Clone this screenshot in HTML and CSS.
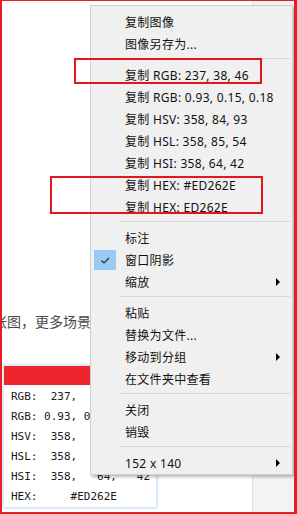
FILE: index.html
```html
<!DOCTYPE html>
<html lang="zh-CN">
<head>
    <meta charset="UTF-8">
    <title>取色菜单</title>
    <link rel="stylesheet" href="styles.css">
</head>
<body>
    <div class="screen">
        <div class="page">
            <div class="main">
                <p class="page-text">张图，更多场景</p>

                <!-- color info window -->
                <div class="color-panel">
                    <div class="color-head"></div>
                    <div class="color-body">
                        <div class="row">RGB:  237,   38,   46</div>
                        <div class="row">RGB: 0.93, 0.15, 0.18</div>
                        <div class="row">HSV:  358,   84,   93</div>
                        <div class="row">HSL:  358,   85,   54</div>
                        <div class="row">HSI:  358,   64,   42</div>
                        <div class="row">HEX:     #ED262E</div>
                    </div>
                </div>
            </div>
            <div class="side"></div>
        </div>

        <!-- context menu -->
        <div class="menu">
            <div class="item"><span class="label">复制图像</span></div>
            <div class="item"><span class="label">图像另存为...</span></div>
            <div class="sep"></div>
            <div class="item"><span class="label">复制 RGB: 237, 38, 46</span></div>
            <div class="item"><span class="label">复制 RGB: 0.93, 0.15, 0.18</span></div>
            <div class="item"><span class="label">复制 HSV: 358, 84, 93</span></div>
            <div class="item"><span class="label">复制 HSL: 358, 85, 54</span></div>
            <div class="item"><span class="label">复制 HSI: 358, 64, 42</span></div>
            <div class="item"><span class="label">复制 HEX: #ED262E</span></div>
            <div class="item"><span class="label">复制 HEX: ED262E</span></div>
            <div class="sep"></div>
            <div class="item"><span class="label">标注</span></div>
            <div class="item">
                <span class="check">
                    <svg width="22" height="20" viewBox="0 0 22 20"><path d="M7.5 10.5 L10 13 L15 8" fill="none" stroke="#2b2b2b" stroke-width="1.2"/></svg>
                </span>
                <span class="label">窗口阴影</span>
            </div>
            <div class="item"><span class="label">缩放</span><span class="arrow"></span></div>
            <div class="sep"></div>
            <div class="item"><span class="label">粘贴</span></div>
            <div class="item"><span class="label">替换为文件...</span></div>
            <div class="item"><span class="label">移动到分组</span><span class="arrow"></span></div>
            <div class="item"><span class="label">在文件夹中查看</span></div>
            <div class="sep"></div>
            <div class="item"><span class="label">关闭</span></div>
            <div class="item"><span class="label">销毁</span></div>
            <div class="sep"></div>
            <div class="item"><span class="label">152 x 140</span><span class="arrow"></span></div>
        </div>

        <!-- red annotation boxes -->
        <div class="mark mark-rgb"></div>
        <div class="mark mark-hex"></div>
    </div>
</body>
</html>
```

FILE: styles.css
```css
/* General */
body {
    margin: 0;
    background: #fff;
    font-family: "Noto Sans", "Noto Sans CJK SC", sans-serif;
}
.screen {
    position: relative;
    width: 297px;
    height: 514px;
    box-sizing: border-box;
    border-style: solid;
    border-color: #e81c24;
    border-width: 1px 3px 2px 2px;
    overflow: hidden;
}

/* Background page */
.page {
    display: flex;
    height: 100%;
}
.main {
    flex: 1;
    min-width: 0;
    background: #fff;
}
.side {
    width: 41px;
    background: #f3f3f3;
    border-left: 1px solid #e2e2e2;
}
.page-text {
    margin: 310px 0 0 -9px;
    font-family: "Noto Sans CJK SC", sans-serif;
    font-size: 14px;
    line-height: 20px;
    color: #4a4a4a;
    white-space: nowrap;
}

/* Color info window */
.color-panel {
    width: 152px;
    margin: 35px 0 0 2px;
    background: #fff;
    box-shadow: 0 0 3px 1px #b9d5f3;
}
.color-head {
    height: 19px;
    background: #ed262e;
}
.color-body {
    padding: 2px 0 0 7px;
    font-family: "DejaVu Sans Mono", monospace;
    font-size: 11px;
    line-height: 20px;
    color: #1a1a1a;
    overflow: hidden;
}
.row {
    white-space: pre;
}

/* Context menu */
.menu {
    position: absolute;
    left: 88px;
    top: 4px;
    width: 201px;
    padding: 5px 0 0;
    background: #f0f0f0;
    border: 1px solid #cfcfcf;
    box-shadow: 2px 2px 3px rgba(0, 0, 0, 0.28);
    font-size: 12px;
    letter-spacing: 0.3px;
    color: #111;
}
.item {
    display: flex;
    align-items: center;
    height: 22px;
    padding-left: 34px;
    position: relative;
}
.label {
    flex: 1;
    white-space: nowrap;
}
.check {
    position: absolute;
    left: 3px;
    top: 1px;
    width: 22px;
    height: 20px;
    background: #99c9f5;
}
.check svg {
    display: block;
}
.arrow {
    width: 0;
    height: 0;
    margin-right: 12px;
    border-left: 4px solid #000;
    border-top: 4px solid transparent;
    border-bottom: 4px solid transparent;
}
.sep {
    height: 1px;
    margin: 3px 2px 5px 30px;
    background: #d6d6d6;
}

/* Annotation boxes */
.mark {
    position: absolute;
    border: 2px solid #e3151d;
}
.mark-rgb {
    left: 72px;
    top: 57px;
    width: 184px;
    height: 22px;
}
.mark-hex {
    left: 48px;
    top: 175px;
    width: 209px;
    height: 34px;
}
```
